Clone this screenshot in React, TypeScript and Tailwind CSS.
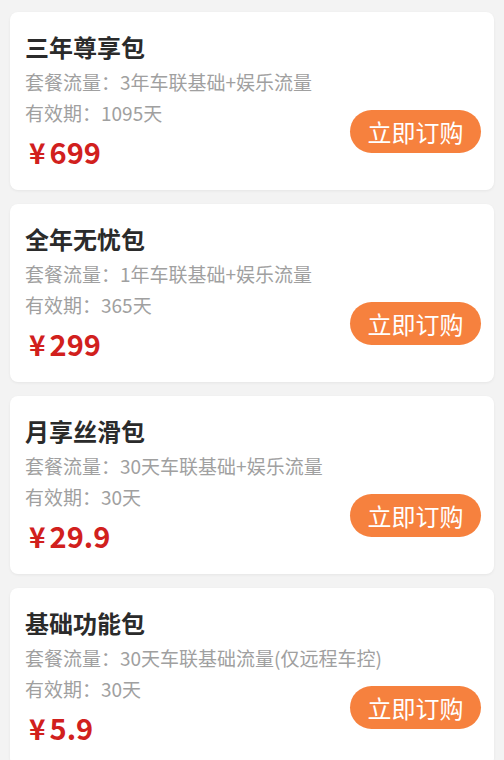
import React from 'react';

type Plan = {
    name: string;
    flow: string;
    days: string;
    price: string;
};

const plans: Plan[] = [
    { name: '三年尊享包', flow: '3年车联基础+娱乐流量', days: '1095天', price: '699' },
    { name: '全年无忧包', flow: '1年车联基础+娱乐流量', days: '365天', price: '299' },
    { name: '月享丝滑包', flow: '30天车联基础+娱乐流量', days: '30天', price: '29.9' },
    { name: '基础功能包', flow: '30天车联基础流量(仅远程车控)', days: '30天', price: '5.9' },
];

function PlanCard({ plan }: { plan: Plan }) {
    return (
        <div className="flex h-[178px] shrink-0 items-start justify-between rounded-[8px] bg-white pl-[15px] pr-[13px] pt-[20px] shadow-[0_1px_3px_rgba(0,0,0,0.06)]">
            <div className="flex min-w-0 flex-1 flex-col whitespace-nowrap">
                <div className="text-[24px] font-bold leading-[30px] text-[#2b2b2b]">{plan.name}</div>
                <div className="mt-[4px] text-[19px] leading-[32px] text-[#a0a0a0]">套餐流量：{plan.flow}</div>
                <div className="text-[19px] leading-[30px] text-[#a0a0a0]">有效期：{plan.days}</div>
                <div className="mt-[5px] flex items-baseline gap-[4px] pl-[4px] text-[28px] font-bold leading-[36px] text-[#d1201d]">
                    <span>¥</span>
                    <span className="text-[29px]">{plan.price}</span>
                </div>
            </div>
            <button className="mt-[78px] flex h-[43px] w-[131px] shrink-0 items-center justify-center rounded-full bg-[#f6813e] text-[24px] leading-none text-white">
                立即订购
            </button>
        </div>
    );
}

export default function App() {
    return (
        <div
            className="flex h-[760px] flex-col gap-[14px] overflow-hidden bg-[#f3f3f3] px-[10px] pt-[12px]"
            style={{ fontFamily: '"Noto Sans CJK SC", "Noto Sans", sans-serif' }}
        >
            {plans.map((p) => (
                <PlanCard key={p.name} plan={p} />
            ))}
        </div>
    );
}
